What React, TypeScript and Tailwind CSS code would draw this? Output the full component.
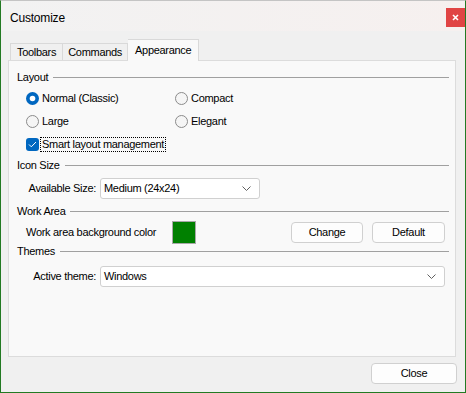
import React from "react"

const font = "font-['Liberation_Sans',Arial,sans-serif] text-[11px] tracking-[-0.3px] text-black"

function Radio({ checked }: { checked?: boolean }) {
  return (
    <svg width="13" height="13" viewBox="0 0 13 13" className="shrink-0">
      {checked ? (
        <>
          <circle cx="6.5" cy="6.5" r="6.5" fill="#0067c0" />
          <circle cx="6.5" cy="6.5" r="2.8" fill="#ffffff" />
        </>
      ) : (
        <circle cx="6.5" cy="6.5" r="6" fill="#f5f5f5" stroke="#8a8a8a" strokeWidth="1" />
      )}
    </svg>
  )
}

function Chevron() {
  return (
    <svg width="9" height="5" viewBox="0 0 9 5" className="shrink-0">
      <path d="M0.5 0.5 L4.5 4.5 L8.5 0.5" fill="none" stroke="#606060" strokeWidth="1" />
    </svg>
  )
}

function GroupHeader({ label }: { label: string }) {
  return (
    <div className="flex items-center h-[15px]">
      <span>{label}</span>
      <div className="flex-1 h-px bg-[#a0a0a0] ml-[5px]" />
    </div>
  )
}

function Select({ value, width }: { value: string; width: string }) {
  return (
    <div className={`${width} h-[21px] flex items-center justify-between bg-white border border-[#d0d0d0] rounded-[3px] pl-[3px] pr-[8px]`}>
      <span>{value}</span>
      <Chevron />
    </div>
  )
}

function Button({ label, width }: { label: string; width: string }) {
  return (
    <div className={`${width} h-[21px] flex items-center justify-center bg-[#fdfdfd] border border-[#d0d0d0] rounded-[4px]`}>
      {label}
    </div>
  )
}

export default function App() {
  return (
    <div className={`${font} w-[466px] h-[393px] flex flex-col bg-[#f0f0f0] border border-[#237a23] border-t-[#c4c4c4]`}>
      {/* title bar */}
      <div className="h-[30px] flex items-start justify-between bg-gradient-to-r from-[#f2f2f2] to-[#f6f0ef]">
        <span className="ml-[9px] mt-[8px] text-[12px] tracking-[-0.2px]">Customize</span>
        <div className="mt-[7px] w-[19px] h-[19px] bg-[#e04444] flex items-center justify-center">
          <svg width="7" height="7" viewBox="0 0 7 7">
            <path d="M1 1 L6 6 M6 1 L1 6" stroke="#ffffff" strokeWidth="1.6" />
          </svg>
        </div>
      </div>

      {/* tabs */}
      <div className="h-[29px] flex items-end pl-[9px] relative z-10">
        <div className="h-[17px] flex items-center px-[6px] border border-b-0 border-[#d9d9d9] bg-[#f0f0f0]">Toolbars</div>
        <div className="h-[17px] flex items-center px-[5px] border border-b-0 border-l-0 border-[#d9d9d9] bg-[#f0f0f0]">Commands</div>
        <div className="h-[22px] -mb-px flex items-center px-[7px] pb-[1px] border border-b-0 border-l-0 border-[#d9d9d9] bg-[#f9f9f9]">Appearance</div>
      </div>

      {/* panel */}
      <div className="ml-[7px] w-[448px] h-[297px] bg-[#f9f9f9] border border-[#dcdcdc] pl-[8px] pr-[6px] pt-[9px] flex flex-col">
        <GroupHeader label="Layout" />
        <div className="ml-[9px] mt-[2px] grid grid-cols-[149px_1fr]">
          <div className="h-[23px] flex items-center gap-[3px]">
            <Radio checked />
            <span>Normal (Classic)</span>
          </div>
          <div className="h-[23px] flex items-center gap-[3px]">
            <Radio />
            <span>Compact</span>
          </div>
          <div className="h-[23px] flex items-center gap-[3px]">
            <Radio />
            <span>Large</span>
          </div>
          <div className="h-[23px] flex items-center gap-[3px]">
            <Radio />
            <span>Elegant</span>
          </div>
          <div className="h-[23px] col-span-2 flex items-center gap-[1px]">
            <div className="w-[13px] h-[13px] rounded-[3px] bg-[#0067c0] flex items-center justify-center">
              <svg width="9" height="7" viewBox="0 0 9 7">
                <path d="M1 3.5 L3.3 5.8 L8 1" fill="none" stroke="#ffffff" strokeWidth="1" />
              </svg>
            </div>
            <span className="border border-dotted border-black px-[1px] leading-[13px]">Smart layout management</span>
          </div>
        </div>

        <div className="mt-[2px]">
          <GroupHeader label="Icon Size" />
        </div>
        <div className="mt-[5px] flex items-center">
          <span className="w-[79px] text-right">Available Size:</span>
          <div className="ml-[4px]">
            <Select value="Medium (24x24)" width="w-[160px]" />
          </div>
        </div>

        <div className="mt-[5px]">
          <GroupHeader label="Work Area" />
        </div>
        <div className="mt-[2px] h-[23px] flex items-center">
          <span className="ml-[9px] w-[146px]">Work area background color</span>
          <div className="w-[24px] h-[23px] bg-[#008000] border border-[#a8a8a8]" />
          <div className="ml-auto mr-[4px] flex gap-[9px]">
            <Button label="Change" width="w-[72px]" />
            <Button label="Default" width="w-[73px]" />
          </div>
        </div>

        <GroupHeader label="Themes" />
        <div className="mt-[7px] flex items-center mr-[4px]">
          <span className="w-[79px] text-right">Active theme:</span>
          <div className="ml-[4px] flex-1">
            <Select value="Windows" width="w-full" />
          </div>
        </div>
      </div>

      {/* footer */}
      <div className="flex justify-end mt-[6px] mr-[8px]">
        <Button label="Close" width="w-[86px]" />
      </div>
    </div>
  )
}
